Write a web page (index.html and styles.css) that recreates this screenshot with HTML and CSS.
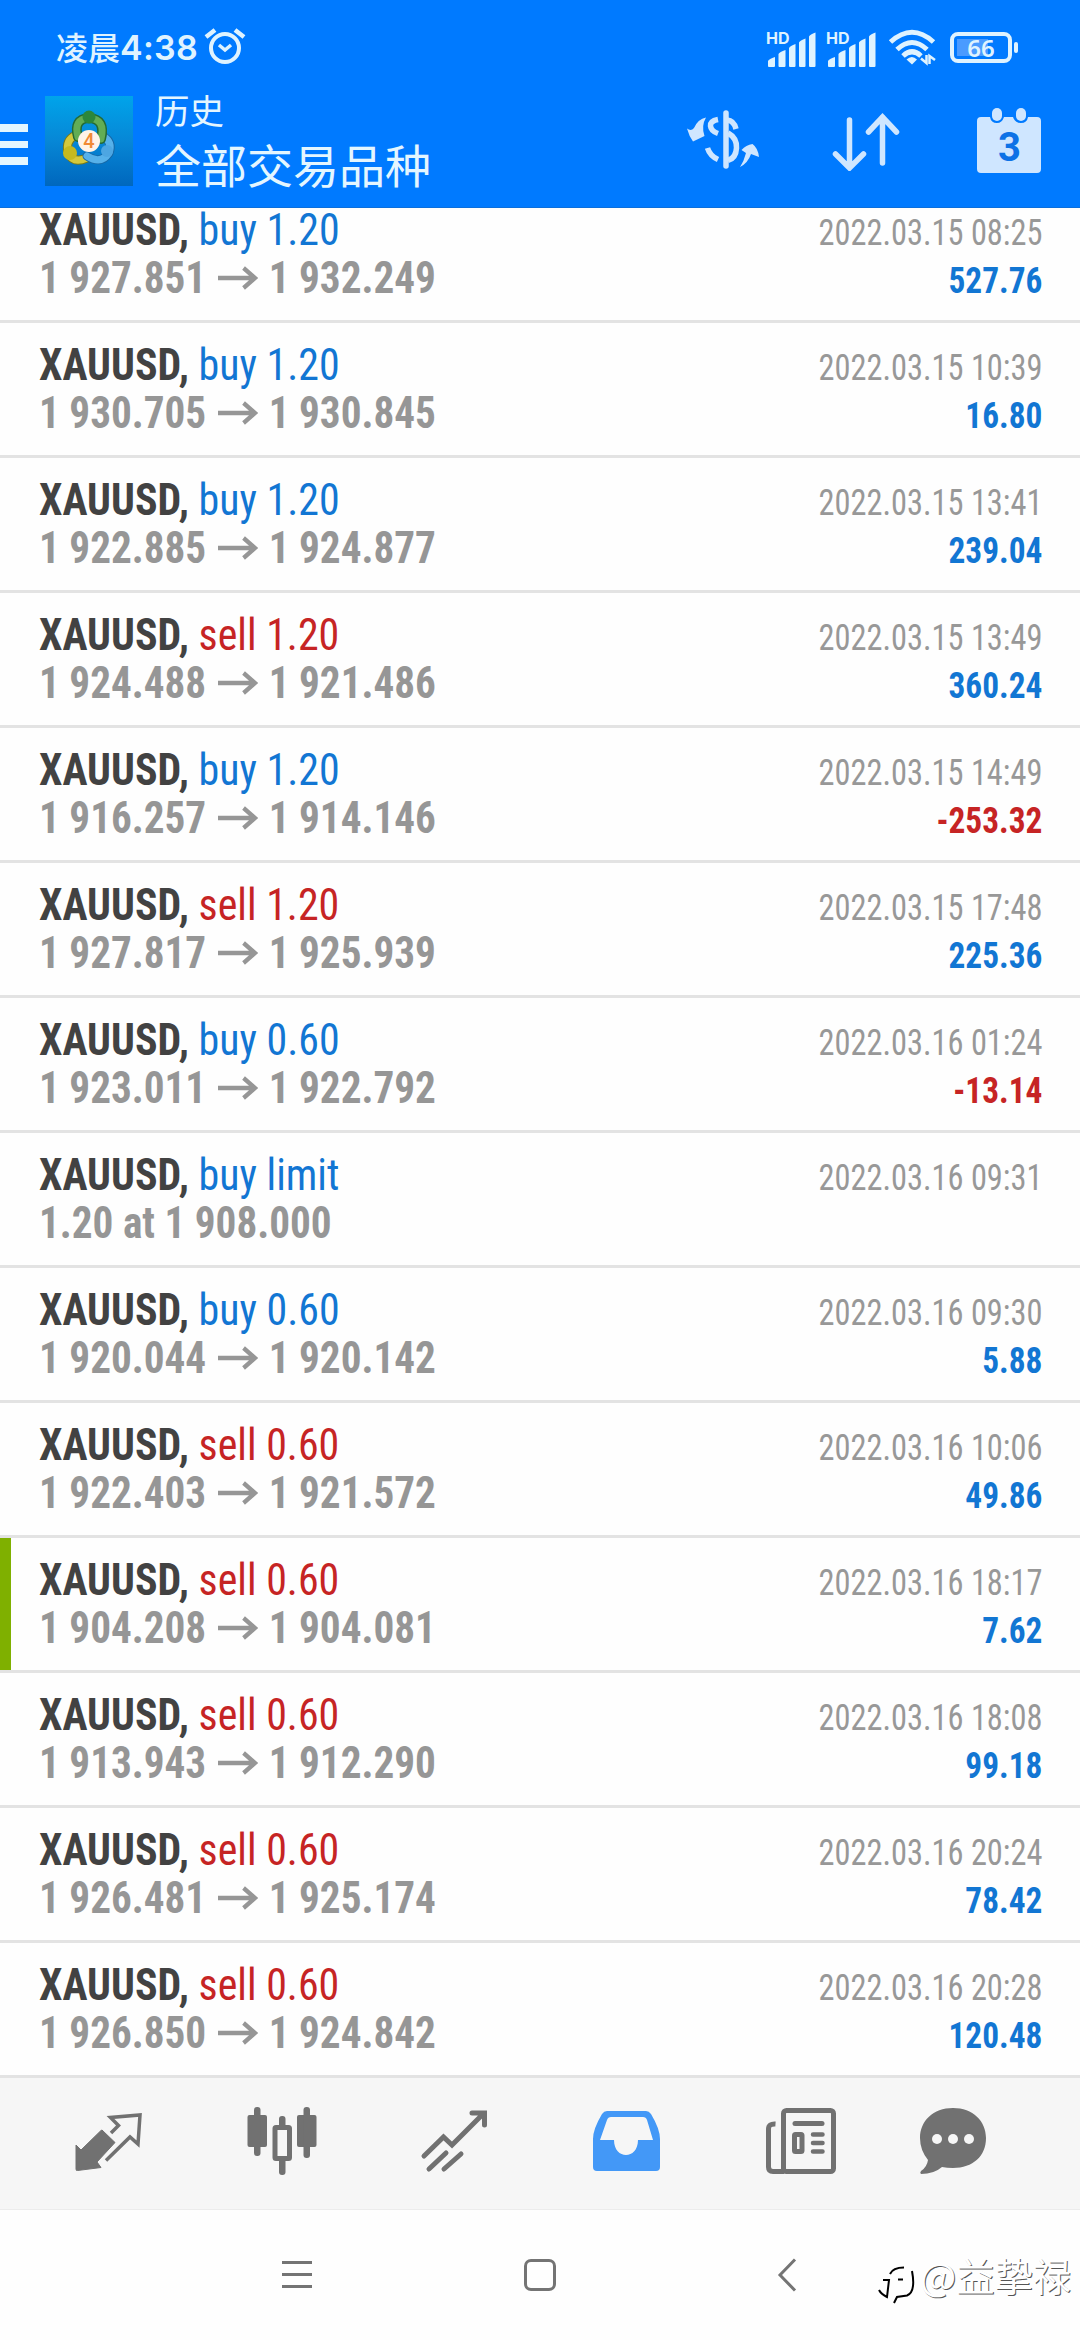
FILE: index.html
```
<!DOCTYPE html>
<html lang="zh-CN">
<head>
<meta charset="utf-8">
<title>历史</title>
<link rel="stylesheet" href="styles.css">
</head>
<body>
<svg class="defs" width="0" height="0"><defs>
<symbol id="arrow" viewBox="0 0 44 32"><path d="M1 15H40M28 5L40 15L28 25" fill="none" stroke="currentColor" stroke-width="4.5"/></symbol>
<symbol id="signal" viewBox="0 0 52 36"><path d="M2 34v-5q1-2 7-4v9q0 1-1 1H3q-1 0-1-1zM12.500 34V22q1-2 7-4v16q0 1-1 1h-5q-1 0-1-1zM23 34V16q1-2 6.500-4v22q0 1-1 1H24q-1 0-1-1zM33 34V10.500q1-2 6.500-4V34q0 1-1 1H34q-1 0-1-1zM43 34V4.500q1-2 6.500-4V34q0 1-1 1H44q-1 0-1-1z" fill="currentColor"/></symbol>
</defs></svg>

<header class="header">
  <div class="status">
    <span class="clock">凌晨<b>4:38</b></span>
    <svg class="alarm" viewBox="204 27 42 40" width="42" height="40"><g fill="none" stroke="#dff3ff"><circle cx="225" cy="49" r="14" stroke-width="4"/><path d="M206 38L215 31M244 38L235 31" stroke-width="4.500"/><path d="M219 46L225 51L231 46" stroke-width="3.500"/></g></svg>
    <div class="signal one"><i>HD</i><svg width="52" height="36"><use href="#signal"/></svg></div>
    <div class="signal"><i>HD</i><svg width="52" height="36"><use href="#signal"/></svg></div>
    <svg class="wifi" viewBox="887 29 48 38" width="48" height="38"><g fill="none" stroke="#dff3ff" stroke-width="5"><path d="M889.500 43Q911 23.500 932.500 43"/><path d="M896 50.500Q911 36.500 926 50.500"/><path d="M902 57Q911 48.500 920 57"/></g><path d="M905.500 60.500Q911 55.500 916 60.500L911 65.500z" fill="#dff3ff"/><path d="M925.500 56V64L920 59.500M928.500 65V57L934 61" fill="none" stroke="#dff3ff" stroke-width="2.500"/></svg>
    <div class="battery"><span>66</span></div>
  </div>
  <div class="appbar">
    <div class="burger"><span></span><span></span><span></span></div>
    <svg class="logo" viewBox="0 0 88 90" width="88" height="90">
      <defs><linearGradient id="sky" x2="0" y2="1"><stop offset="0" stop-color="#00a4ea"/><stop offset=".5" stop-color="#0787d6"/><stop offset="1" stop-color="#0067bd"/></linearGradient></defs>
      <rect width="88" height="90" fill="url(#sky)"/>
      <g fill="none" stroke-linecap="round">
        <path d="M31 39Q20 44 23 57Q28 68 42 62" stroke="#77791a" stroke-width="9"/>
        <path d="M31 39Q20 44 23 57Q28 68 42 62" stroke="#d4c83b" stroke-width="7"/>
        <path d="M58 40Q68 46 64 57Q56 69 42 60" stroke="#1767a5" stroke-width="9"/>
        <path d="M58 40Q68 46 64 57Q56 69 42 60" stroke="#56b1ea" stroke-width="7"/>
        <path d="M33 41Q28 23 44 22Q61 23 56 43" stroke="#246a35" stroke-width="10"/>
        <path d="M33 41Q28 23 44 22Q61 23 56 43" stroke="#62ad55" stroke-width="7"/>
      </g>
      <circle cx="44" cy="21" r="6.500" fill="#2c873c"/><circle cx="25" cy="57" r="7" fill="#c5b91f"/><circle cx="62" cy="55" r="6" fill="#4da6e2"/>
      <circle cx="44" cy="45" r="11" fill="#fff3e8"/>
      <text x="44" y="52" class="logo-num">4</text>
    </svg>
    <div class="titles"><div class="small">历史</div><div class="big">全部交易品种</div></div>
    <svg class="currency" viewBox="685 108 75 64" width="75" height="64"><g fill="none" stroke="#cfe6ff" stroke-width="5.500"><path d="M725 114V167" stroke-linecap="round"/><path d="M717 120.500Q709 122 709.500 127Q710 132 717 134.500M726 121Q733 121.500 735 130M727 134Q736 139 735.500 149Q735 159 727 161.500M706.500 149Q709 157 717 160.500"/></g><path d="M705 118.500Q700 127 703.500 137L692 142.500Q688 137 686 129.500Q690 132.500 693 129Q697 120 705 118.500zM739 168Q747 164 750 155L758 158Q757 149 751.500 145Q745 146 740.500 151L745 154Q743 162 739 168z" fill="#cfe6ff"/></svg>
    <svg class="sort" viewBox="830 112 70 60" width="70" height="60"><path d="M848.500 121V168M834.500 155L848.500 169L862.500 155M881.500 164V118M867.500 133L881.500 118L895.500 133" fill="none" stroke="#cfe6ff" stroke-width="5.500" stroke-linecap="round"/></svg>
    <svg class="calendar" viewBox="976 108 64 67" width="64" height="67"><path d="M980 118H989Q990 124 996 124Q1001 124 1003 118H1012Q1014 124 1020 124Q1026 124 1027 118H1036Q1040 118 1040 122V170Q1040 174 1036 174H980Q976 174 976 170V122Q976 118 980 118z" fill="#cfe6ff"/><rect x="991" y="109" width="10" height="13" rx="5" fill="#cfe6ff"/><rect x="1015" y="109" width="10" height="13" rx="5" fill="#cfe6ff"/><text x="1008.500" y="162" class="cal-num">3</text></svg>
  </div>
</header>

<main class="deals">
  <div class="deal"><div class="l"><p><b>XAUUSD,</b> <span class="buy">buy 1.20</span></p><p class="price">1 927.851<svg><use href="#arrow"/></svg>1 932.249</p></div><div class="r"><p>2022.03.15 08:25</p><p class="profit">527.76</p></div></div>
  <div class="deal"><div class="l"><p><b>XAUUSD,</b> <span class="buy">buy 1.20</span></p><p class="price">1 930.705<svg><use href="#arrow"/></svg>1 930.845</p></div><div class="r"><p>2022.03.15 10:39</p><p class="profit">16.80</p></div></div>
  <div class="deal"><div class="l"><p><b>XAUUSD,</b> <span class="buy">buy 1.20</span></p><p class="price">1 922.885<svg><use href="#arrow"/></svg>1 924.877</p></div><div class="r"><p>2022.03.15 13:41</p><p class="profit">239.04</p></div></div>
  <div class="deal"><div class="l"><p><b>XAUUSD,</b> <span class="sell">sell 1.20</span></p><p class="price">1 924.488<svg><use href="#arrow"/></svg>1 921.486</p></div><div class="r"><p>2022.03.15 13:49</p><p class="profit">360.24</p></div></div>
  <div class="deal"><div class="l"><p><b>XAUUSD,</b> <span class="buy">buy 1.20</span></p><p class="price">1 916.257<svg><use href="#arrow"/></svg>1 914.146</p></div><div class="r"><p>2022.03.15 14:49</p><p class="loss">-253.32</p></div></div>
  <div class="deal"><div class="l"><p><b>XAUUSD,</b> <span class="sell">sell 1.20</span></p><p class="price">1 927.817<svg><use href="#arrow"/></svg>1 925.939</p></div><div class="r"><p>2022.03.15 17:48</p><p class="profit">225.36</p></div></div>
  <div class="deal"><div class="l"><p><b>XAUUSD,</b> <span class="buy">buy 0.60</span></p><p class="price">1 923.011<svg><use href="#arrow"/></svg>1 922.792</p></div><div class="r"><p>2022.03.16 01:24</p><p class="loss">-13.14</p></div></div>
  <div class="deal"><div class="l"><p><b>XAUUSD,</b> <span class="buy">buy limit</span></p><p class="price">1.20 at 1 908.000</p></div><div class="r"><p>2022.03.16 09:31</p></div></div>
  <div class="deal"><div class="l"><p><b>XAUUSD,</b> <span class="buy">buy 0.60</span></p><p class="price">1 920.044<svg><use href="#arrow"/></svg>1 920.142</p></div><div class="r"><p>2022.03.16 09:30</p><p class="profit">5.88</p></div></div>
  <div class="deal"><div class="l"><p><b>XAUUSD,</b> <span class="sell">sell 0.60</span></p><p class="price">1 922.403<svg><use href="#arrow"/></svg>1 921.572</p></div><div class="r"><p>2022.03.16 10:06</p><p class="profit">49.86</p></div></div>
  <div class="deal marked"><div class="l"><p><b>XAUUSD,</b> <span class="sell">sell 0.60</span></p><p class="price">1 904.208<svg><use href="#arrow"/></svg>1 904.081</p></div><div class="r"><p>2022.03.16 18:17</p><p class="profit">7.62</p></div></div>
  <div class="deal"><div class="l"><p><b>XAUUSD,</b> <span class="sell">sell 0.60</span></p><p class="price">1 913.943<svg><use href="#arrow"/></svg>1 912.290</p></div><div class="r"><p>2022.03.16 18:08</p><p class="profit">99.18</p></div></div>
  <div class="deal"><div class="l"><p><b>XAUUSD,</b> <span class="sell">sell 0.60</span></p><p class="price">1 926.481<svg><use href="#arrow"/></svg>1 925.174</p></div><div class="r"><p>2022.03.16 20:24</p><p class="profit">78.42</p></div></div>
  <div class="deal"><div class="l"><p><b>XAUUSD,</b> <span class="sell">sell 0.60</span></p><p class="price">1 926.850<svg><use href="#arrow"/></svg>1 924.842</p></div><div class="r"><p>2022.03.16 20:28</p><p class="profit">120.48</p></div></div>
</main>

<nav class="tabs">
  <svg viewBox="74 2106 70 70" width="70" height="70"><path d="M102 2130L115 2142.500L97 2162L101 2167.500L77.500 2170.500Q76 2171 76 2169V2145L81 2150L101 2130.500z" fill="#717171" stroke="#717171" stroke-linejoin="round"/><path d="M111 2133L118.500 2125.500L110.500 2117.500L140 2115L138 2144L130 2137L106 2160.500" fill="none" stroke="#717171" stroke-width="3.500"/></svg>
  <svg viewBox="244 2106 74 72" width="74" height="72"><g fill="#717171"><rect x="246.500" y="2116" width="19.500" height="32" rx="2"/><rect x="253" y="2108" width="6.500" height="49" rx="3"/><rect x="296" y="2116" width="19.500" height="32" rx="2"/><rect x="302.500" y="2108" width="6.500" height="51" rx="3"/><rect x="278" y="2117" width="6.500" height="12" rx="3"/><rect x="278" y="2159" width="6.500" height="17" rx="3"/></g><rect x="274" y="2128.500" width="14.500" height="31" rx="1" fill="none" stroke="#717171" stroke-width="5"/></svg>
  <svg viewBox="420 2107 70 68" width="70" height="68"><path d="M424 2156L443.500 2137L452 2145L483 2114M472 2113H484.500V2125M429 2169L446 2153M444 2169L461 2154" fill="none" stroke="#717171" stroke-width="5" stroke-linecap="round"/></svg>
  <svg viewBox="592 2108 72 66" width="72" height="66"><path fill-rule="evenodd" d="M608 2111H647Q650 2111 652 2114Q661 2129 661 2139V2167Q661 2171 657 2171H598Q594 2171 594 2167V2139Q594 2129 603 2114Q605 2111 608 2111zM612 2117Q609 2117 608 2120L601 2140H615C615 2160 639 2160 639 2140H654L648 2120Q647 2117 644 2117z" fill="#4398f7"/></svg>
  <svg viewBox="764 2106 74 70" width="74" height="70"><g fill="none" stroke="#717171"><rect x="783.500" y="2110.500" width="50" height="61" rx="3" stroke-width="5"/><path d="M775.500 2124Q768.500 2123.500 768.500 2129V2167Q768.500 2171.500 773 2171.500H784" stroke-width="5"/><path d="M795 2123.500H822" stroke-width="5" stroke-linecap="round"/><rect x="794.500" y="2134.500" width="7.500" height="17" rx="1" stroke-width="5"/><path d="M813 2134.500H822.500M813 2143H822.500M813 2151.500H822.500" stroke-width="4.500" stroke-linecap="round"/></g></svg>
  <svg viewBox="918 2106 70 70" width="70" height="70"><path d="M953 2108C973 2108 986 2121 986 2138C986 2156 973 2168 953 2168Q947 2168 942 2167Q934 2174 921 2174Q919.500 2173 921 2171Q927 2167 928 2160Q920 2150 920 2138C920 2121 933 2108 953 2108z" fill="#717171"/><g fill="#f6f6f6"><circle cx="937" cy="2139" r="5"/><circle cx="953" cy="2139" r="5"/><circle cx="969" cy="2139" r="5"/></g></svg>
</nav>

<footer class="sysnav">
  <svg viewBox="280 2258 34 34" width="34" height="34"><path d="M282 2262.500H312M282 2274.500H312M282 2286.500H312" stroke="#747474" stroke-width="3"/></svg>
  <svg viewBox="522 2257 36 36" width="36" height="36"><rect x="525.500" y="2260.500" width="29" height="29" rx="5.500" fill="none" stroke="#747474" stroke-width="3"/></svg>
  <svg viewBox="776 2257 24 36" width="24" height="36"><path d="M795 2259.500L780 2275L795 2290.500" fill="none" stroke="#747474" stroke-width="3"/></svg>
  <div class="watermark"><svg viewBox="876 2264 42 42" width="42" height="42"><g fill="none" stroke="#000" stroke-width="2"><path d="M890 2274Q893 2267.500 904 2267.500"/><path d="M912 2271Q916 2292 907 2295.500L897 2297L894 2303"/><path d="M883 2280H889L887 2297Q881 2294 879 2290M898 2279.500H903"/></g></svg><span>@益挚禄</span></div>
</footer>
</body>
</html>
```
FILE: styles.css
```
* { box-sizing: border-box; }
body { margin: 0; width: 1080px; height: 2340px; overflow: hidden; display: flex; flex-direction: column; background: #fefefe; font-family: Roboto, "Noto Sans CJK SC", sans-serif; }
p { margin: 0; white-space: nowrap; }
svg { display: block; flex: none; }
.defs { position: absolute; }

.header { height: 208px; flex: none; background: #007aff; border-bottom: 1px solid #0b6fdc; color: #e4f6ff; }
.status { height: 88px; display: flex; align-items: flex-start; padding: 26px 0 0 56px; color: #dff3ff; }
.clock { width: 148px; margin-top: -1px; font: 500 32px/42px "Noto Sans CJK SC", sans-serif; white-space: nowrap; }
.clock b { font: 600 34px/42px Inter, sans-serif; letter-spacing: .3px; }
.signal { position: relative; width: 52px; margin: 6px 8px 0 0; color: #dff3ff; }
.signal.one { margin-left: 520px; }
.signal svg { width: 52px; height: 36px; }
.signal i { position: absolute; left: 0; top: -4px; font: 700 16px/20px Inter, sans-serif; }
.wifi { margin: 2px 14px 0 2px; }
.battery { position: relative; width: 62px; height: 31px; margin-top: 6px; border: 4px solid #dff3ff; border-radius: 8px; display: flex; align-items: center; justify-content: center; font: 600 24px/23px "Noto Sans", sans-serif; background: linear-gradient(#4a9bff, #4a9bff) 3px 3px / 31px 17px no-repeat; }
.battery::after { content: ""; position: absolute; left: 60px; top: 6px; width: 4px; height: 11px; border-radius: 2px; background: #dff3ff; }

.appbar { height: 119px; display: flex; align-items: flex-start; }
.burger { width: 28px; margin: 36px 17px 0 0; display: flex; flex-direction: column; gap: 9px; }
.burger span { height: 7.500px; background: #e4f6ff; }
.logo { margin-top: 8px; }
.logo-num { font: 500 20px Roboto, sans-serif; fill: #f08a35; text-anchor: middle; }
.titles { width: 275px; margin-left: 22px; font-family: "Noto Sans CJK SC", sans-serif; font-weight: 400; white-space: nowrap; }
.small { font-size: 34.500px; line-height: 40px; margin-top: 1px; }
.big { font-size: 46px; line-height: 60px; margin-top: 4px; }
.currency { margin: 19px 0 0 256px; }
.sort { margin: 23px 0 0 70px; }
.calendar { margin: 19px 0 0 76px; }
.cal-num { font: 700 40px Roboto, sans-serif; fill: #0d72e6; text-anchor: middle; }

.deals { height: 1870px; flex: none; display: flex; flex-direction: column; font-family: "Roboto Condensed", Roboto, sans-serif; font-stretch: 75%; }
.deal { height: 135px; border-bottom: 3px solid #e3e3e3; display: flex; justify-content: space-between; align-items: flex-end; padding: 0 37.500px 15px 39px; }
.deal:first-child { height: 115px; }
.deal.marked { border-left: 11px solid #7fb000; padding-left: 28px; border-bottom: 0; height: 132px; box-shadow: 0 3px #e3e3e3; margin-bottom: 3px; }
.l, .r { height: 96px; }
.l { margin-bottom: 2px; }
.l p { font-size: 43.500px; line-height: 48px; height: 48px; transform: scaleX(.963); transform-origin: left; }
.l b { color: #424242; font-weight: 700; }
.r p { font-size: 36.500px; line-height: 48px; height: 48px; text-align: right; color: #989898; transform: scaleX(.887); transform-origin: right; }
.buy { color: #1276d3; }
.sell { color: #c62424; }
.l .price { display: flex; color: #969696; font-weight: 700; transform: scaleX(.947); }
.price svg { width: 44px; height: 32px; margin: 8px 11px 0; }
.r .profit, .r .loss { font-weight: 700; color: #1276d3; transform: scaleX(.913); }
.r .loss { color: #c62424; }

.tabs { height: 132px; flex: none; background: #f6f6f6; border-bottom: 1px solid #ececec; display: flex; align-items: center; gap: 101px; padding: 0 0 6px 74px; }
.tabs svg:last-child { margin-left: -21px; }
.sysnav { flex: 1; display: flex; align-items: flex-start; padding: 48px 0 0 280px; }
.sysnav > svg:nth-child(1) { margin: 0 208px 0 0; }
.sysnav > svg:nth-child(2) { margin: -1px 218px 0 0; }
.sysnav > svg:nth-child(3) { margin: -1px 76px 0 0; }
.watermark { display: flex; color: #fff; font: 38.300px/54px "Noto Sans CJK SC", sans-serif; white-space: nowrap; text-shadow: 1px 1px 0 #555; }
.watermark svg { margin-top: 6px; }
.watermark span { margin-left: 2px; margin-top: -10px; }
```
